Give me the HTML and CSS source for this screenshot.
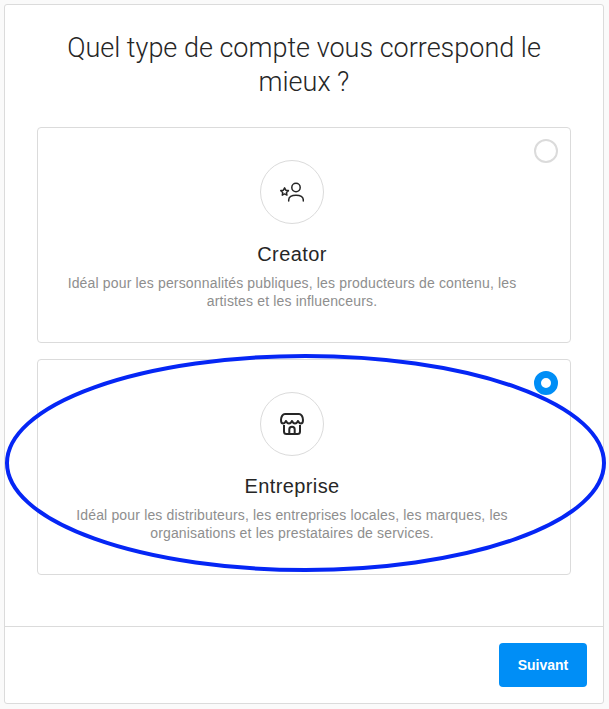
FILE: index.html
```html
<!DOCTYPE html>
<html lang="fr">
<head>
    <meta charset="UTF-8">
    <meta name="viewport" content="width=device-width, initial-scale=1.0">
    <title>Type de compte</title>
    <link rel="stylesheet" href="styles.css">
</head>
<body>

<div class="panel">
    <div class="panel-body">
        <h1 class="heading">Quel type de compte vous correspond le mieux ?</h1>

        <div class="option">
            <span class="radio"></span>
            <div class="option-icon">
                <svg width="24" height="24" viewBox="0 0 24 24" fill="none" stroke="#262626" stroke-width="1.5">
                    <circle cx="16" cy="7.500" r="4.200"/>
                    <path d="M8.700 21v-1c0-3 2.800-4.800 7.300-4.800s7.300 1.800 7.300 4.800v1" stroke-linecap="round"/>
                    <path d="M4.600 7.800l1.200 2.400 2.600.4-1.900 1.900.4 2.600-2.300-1.200-2.300 1.200.4-2.600L.8 10.600l2.600-.4z" stroke-linejoin="round"/>
                </svg>
            </div>
            <h2 class="option-title">Creator</h2>
            <p class="option-text">Idéal pour les personnalités publiques, les producteurs de contenu, les artistes et les influenceurs.</p>
        </div>

        <div class="option">
            <span class="radio radio-on"></span>
            <div class="option-icon">
                <svg width="24" height="24" viewBox="0 0 24 24" fill="none" stroke="#262626" stroke-width="2">
                    <path d="M4 13v6.500A2.500 2.500 0 0 0 6.500 22h11a2.500 2.500 0 0 0 2.500-2.500V13"/>
                    <path d="M5 2h14c2 0 4 2.500 4 6 0 2-.9 3.500-2.200 3.500-1.500 0-2.800-2.500-2.800-2.500s-1.200 2.500-3 2.500-3-2.500-3-2.500-1.200 2.500-3 2.500S6 9 6 9s-1.300 2.500-2.800 2.500C1.900 11.500 1 10 1 8c0-3.500 2-6 4-6z" stroke-linejoin="round"/>
                    <path d="M9.300 22v-4.500a2.700 2.700 0 0 1 5.400 0V22"/>
                </svg>
            </div>
            <h2 class="option-title">Entreprise</h2>
            <p class="option-text">Idéal pour les distributeurs, les entreprises locales, les marques, les organisations et les prestataires de services.</p>
        </div>
    </div>

    <div class="panel-footer">
        <button type="button" class="next-btn">Suivant</button>
    </div>
</div>

<!-- Annotation par-dessus la capture -->
<svg class="annotation" width="609" height="709" viewBox="0 0 609 709" fill="none">
    <ellipse cx="305.500" cy="463" rx="298.500" ry="107" stroke="#0526f5" stroke-width="4"/>
</svg>

</body>
</html>
```

FILE: styles.css
```css
* {
    box-sizing: border-box;
}
html, body {
    height: 100%;
}
body {
    margin: 0;
    background-color: #fafafa;
    font-family: "Liberation Sans", Roboto, sans-serif;
    color: #262626;
    overflow: hidden;
}
.panel {
    width: 600px;
    height: 700px;
    margin: 4px 0 0 4px;
    background-color: #fff;
    border: 1px solid #dbdbdb;
    border-radius: 3px;
    display: flex;
    flex-direction: column;
}
.panel-body {
    flex: 1;
    padding: 26px 32px 0;
    display: flex;
    flex-direction: column;
}
.heading {
    margin: 0 0 28px;
    padding: 0 16px;
    font-family: Roboto, sans-serif;
    font-size: 27px;
    line-height: 34px;
    font-weight: 300;
    text-align: center;
}
.option {
    position: relative;
    height: 216px;
    margin-bottom: 16px;
    padding: 32px 24px 0 0;
    border: 1px solid #dbdbdb;
    border-radius: 4px;
    text-align: center;
}
.radio {
    position: absolute;
    top: 11px;
    right: 12px;
    width: 24px;
    height: 24px;
    border: 2px solid #dbdbdb;
    border-radius: 50%;
}
.radio-on {
    border: 7px solid #008ef6;
}
.option-icon {
    width: 64px;
    height: 64px;
    margin: 0 auto;
    border: 1px solid #dbdbdb;
    border-radius: 50%;
    display: flex;
    align-items: center;
    justify-content: center;
}
.option-title {
    margin: 17px 0 7px;
    font-size: 20px;
    line-height: 26px;
    font-weight: 400;
    letter-spacing: 0.4px;
}
.option-text {
    margin: 0 auto;
    padding: 0 24px;
    font-size: 14px;
    line-height: 18px;
    letter-spacing: 0.16px;
    color: #8e8e8e;
}
.panel-footer {
    height: 77px;
    padding: 16px 16px 0 0;
    border-top: 1px solid #dbdbdb;
    display: flex;
    justify-content: flex-end;
    align-items: flex-start;
}
.next-btn {
    width: 88px;
    height: 44px;
    border: 0;
    border-radius: 4px;
    background-color: #008ef6;
    color: #fff;
    font-family: inherit;
    font-size: 14px;
    font-weight: 700;
}
.annotation {
    position: absolute;
    left: 0;
    top: 0;
    pointer-events: none;
}
```
